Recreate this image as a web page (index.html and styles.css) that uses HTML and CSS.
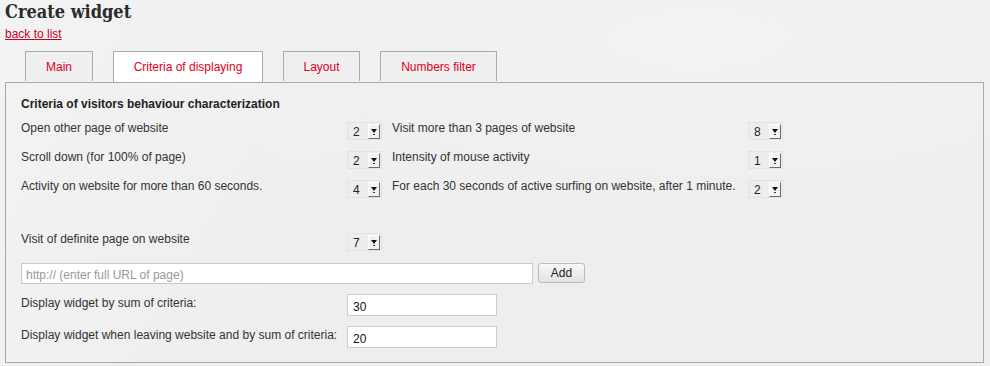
FILE: index.html
```html
<!DOCTYPE html>
<html lang="en">
<head>
  <meta charset="UTF-8">
  <title>Create widget</title>
  <link rel="stylesheet" href="styles.css">
</head>
<body>
  <h1>Create widget</h1>
  <a href="#" class="back">back to list</a>

  <div class="tabs">
    <a href="#" class="tab tab-main">Main</a>
    <a href="#" class="tab tab-criteria active">Criteria of displaying</a>
    <a href="#" class="tab tab-layout">Layout</a>
    <a href="#" class="tab tab-numbers">Numbers filter</a>
  </div>

  <div class="panel">
    <h2>Criteria of visitors behaviour characterization</h2>

    <div class="criteria">
      <span class="label">Open other page of website</span>
      <span class="select"><span class="val">2</span><span class="arrow"></span></span>
      <span class="label">Visit more than 3 pages of website</span>
      <span class="select"><span class="val">8</span><span class="arrow"></span></span>

      <span class="label">Scroll down (for 100% of page)</span>
      <span class="select"><span class="val">2</span><span class="arrow"></span></span>
      <span class="label">Intensity of mouse activity</span>
      <span class="select"><span class="val">1</span><span class="arrow"></span></span>

      <span class="label">Activity on website for more than 60 seconds.</span>
      <span class="select"><span class="val">4</span><span class="arrow"></span></span>
      <span class="label">For each 30 seconds of active surfing on website, after 1 minute.</span>
      <span class="select"><span class="val">2</span><span class="arrow"></span></span>
    </div>

    <div class="criteria definite">
      <span class="label">Visit of definite page on website</span>
      <span class="select"><span class="val">7</span><span class="arrow"></span></span>
    </div>

    <div class="url-row">
      <input type="text" class="url" placeholder="http:// (enter full URL of page)">
      <button class="add">Add</button>
    </div>

    <div class="sum-row">
      <span class="label">Display widget by sum of criteria:</span>
      <input type="text" class="sum" value="30">
    </div>
    <div class="sum-row">
      <span class="label">Display widget when leaving website and by sum of criteria:</span>
      <input type="text" class="sum" value="20">
    </div>
  </div>
</body>
</html>
```

FILE: styles.css
```css
body {
  margin: 0;
  padding: 0 6px 0 5px;
  font-family: "Liberation Sans", Arial, sans-serif;
  font-size: 12px;
  color: #333;
  background: #eeeeee;
  background-image:
    radial-gradient(ellipse 900px 300px at 700px 40px, rgba(255,255,255,0.25), rgba(255,255,255,0) 70%),
    linear-gradient(120deg, rgba(255,255,255,0.3) 0%, rgba(255,255,255,0) 40%);
  height: 366px;
  overflow: hidden;
}
h1 {
  font-family: "DejaVu Serif Condensed", "DejaVu Serif", serif;
  font-size: 18px;
  font-weight: bold;
  margin: 0;
  line-height: 24px;
  color: #2b2b2b;
}
.back {
  display: inline-block;
  color: #c8001e;
  font-size: 12px;
  margin-top: 3px;
  line-height: 14px;
}
.tabs {
  display: flex;
  gap: 20px;
  padding-left: 20px;
  margin-top: 10px;
  position: relative;
  z-index: 1;
}
.tab {
  display: block;
  height: 30px;
  line-height: 31px;
  box-sizing: border-box;
  border: 1px solid #aaa;
  border-bottom: none;
  background: #efefef;
  color: #e0001b;
  text-decoration: none;
  text-align: center;
  font-size: 12px;
}
.tab.active {
  background: #fff;
  height: 31px;
}
.tab-main { width: 68px; }
.tab-criteria { width: 150px; }
.tab-layout { width: 77px; }
.tab-numbers { width: 117px; }
.panel {
  border: 1px solid #aaa;
  box-sizing: border-box;
  height: 281px;
  padding: 13px 15px 0;
}
h2 {
  font-size: 12px;
  font-weight: bold;
  margin: 0 0 8px;
  line-height: 16px;
  color: #222;
}
.criteria {
  display: grid;
  grid-template-columns: 326px 45px 356px auto;
  grid-auto-rows: 29px;
  align-items: start;
}
.criteria .label {
  padding-top: 1px;
  line-height: 14px;
}
.definite {
  margin-top: 24px;
}
.select {
  display: flex;
  align-items: center;
  justify-content: space-between;
  margin-top: 2px;
  width: 35px;
  height: 18px;
  box-sizing: border-box;
  border: 1px solid #e2e2e2;
  background: #ededed;
  padding: 0 1px 0 5px;
}
.val {
  font-size: 12px;
  color: #222;
  padding-top: 2px;
}
.arrow {
  width: 12px;
  height: 15px;
  box-sizing: border-box;
  background: #f2f2f2;
  border-left: 1px solid #fff;
  border-top: 1px solid #fff;
  border-right: 1px solid #6c6c6c;
  border-bottom: 1px solid #6c6c6c;
  position: relative;
  margin-top: 1px;
}
.arrow::before {
  content: "";
  position: absolute;
  left: 2px;
  top: 4px;
  border-left: 3px solid transparent;
  border-right: 3px solid transparent;
  border-top: 4px solid #111;
}
.arrow::after {
  content: "";
  position: absolute;
  left: 4px;
  top: 9px;
  width: 2px;
  height: 1px;
  background: #333;
}
.url-row {
  display: flex;
  gap: 5px;
  margin-top: 3px;
}
.url {
  width: 512px;
  height: 21px;
  box-sizing: border-box;
  border: 1px solid #c9c9c9;
  background: #fff;
  font-family: "Liberation Sans", Arial, sans-serif;
  font-size: 12px;
  padding: 2px 4px 0;
  margin: 0;
  color: #333;
}
.url::placeholder {
  color: #999;
}
.add {
  width: 47px;
  height: 20px;
  border: 1px solid #bbb;
  border-radius: 3px;
  background: linear-gradient(#f8f8f8, #e2e2e2);
  font-family: "Liberation Sans", Arial, sans-serif;
  font-size: 12px;
  color: #222;
  padding: 0;
  margin: 0;
}
.sum-row {
  display: flex;
  align-items: flex-start;
  margin-top: 10px;
}
.sum-row .label {
  width: 326px;
  padding-top: 2px;
}
.sum {
  width: 150px;
  height: 22px;
  box-sizing: border-box;
  border: 1px solid #ccc;
  background: #fff;
  font-family: "Liberation Sans", Arial, sans-serif;
  font-size: 12px;
  color: #111;
  padding: 3px 5px 0;
  margin: 0;
}
```
